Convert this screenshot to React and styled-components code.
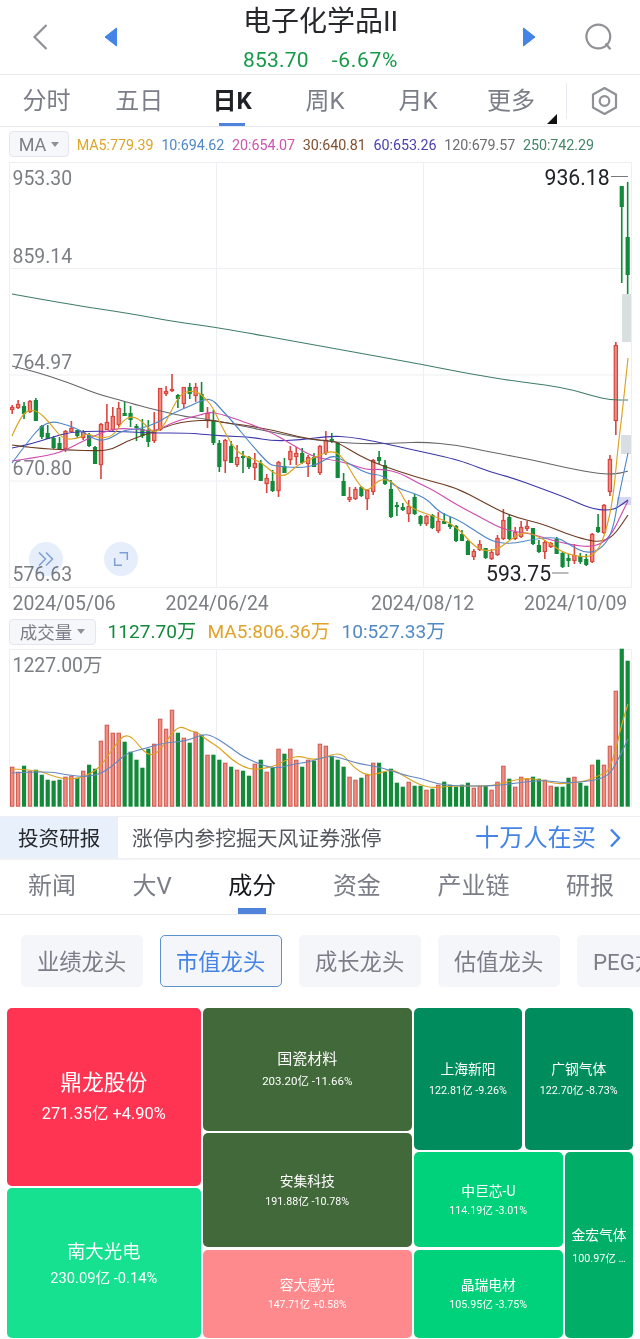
import styled, { createGlobalStyle } from "styled-components";

const GlobalStyle = createGlobalStyle`
  * {
    box-sizing: border-box;
  }
  body {
    margin: 0;
    background: #fff;
    font-family: Roboto, "Noto Sans CJK SC", sans-serif;
  }
  svg {
    display: block;
  }
`;

const Pagina = styled.div`
  width: 640px;
  height: 1339px;
  overflow: hidden;
  background: #fff;
`;

const Header = styled.header`
  display: flex;
  align-items: center;
  justify-content: space-between;
  height: 75px;
  padding: 0 26px 0 32px;
  border-bottom: 1px solid #e8eaef;
`;
const HeaderSide = styled.div`
  display: flex;
  align-items: center;
  justify-content: space-between;
  width: ${(p) => p.$width}px;
`;
const TitleBox = styled.div`
  display: flex;
  flex-direction: column;
  align-items: center;
  padding-top: 7px;
`;
const Title = styled.h1`
  margin: 0;
  font-size: 28px;
  line-height: 38px;
  font-weight: 400;
  color: #26282c;
`;
const Quote = styled.div`
  display: flex;
  gap: 23px;
  font-size: 21px;
  line-height: 38px;
  color: #159a48;
  letter-spacing: 0.2px;
`;
const Change = styled.span`
  letter-spacing: 0.7px;
`;

const PeriodBar = styled.nav`
  display: flex;
  align-items: center;
  height: 52px;
  border-bottom: 1px solid #e8eaef;
`;
const Period = styled.div`
  position: relative;
  flex: none;
  width: 92.9px;
  height: 51px;
  line-height: 53px;
  text-align: center;
  font-size: 24px;
  font-weight: ${(p) => (p.$active ? 700 : 400)};
  color: ${(p) => (p.$active ? "#1f2126" : "#7b7e88")};
`;
const Underline = styled.span`
  position: absolute;
  left: 50%;
  bottom: 0;
  width: ${(p) => p.$width}px;
  height: ${(p) => p.$height}px;
  margin-left: ${(p) => -p.$width / 2}px;
  background: #4f83dc;
`;
const Corner = styled.span`
  position: absolute;
  right: 0;
  bottom: 2px;
  border-left: 10px solid transparent;
  border-bottom: 10px solid #111;
`;
const Settings = styled.div`
  display: flex;
  flex: 1;
  justify-content: center;
  align-items: center;
  height: 36px;
  margin-left: 9px;
  border-left: 1px solid #e8eaef;
`;

const Legend = styled.div`
  display: flex;
  align-items: center;
  height: ${(p) => p.$height}px;
  padding-left: 9px;
  gap: ${(p) => p.$gap}px;
  font-size: ${(p) => p.$size}px;
  letter-spacing: ${(p) => p.$spacing || 0}px;
  white-space: nowrap;
`;
const Pill = styled.div`
  display: flex;
  align-items: center;
  justify-content: center;
  gap: 5px;
  width: ${(p) => p.$width}px;
  height: 26px;
  border: 1px solid #e4e6ee;
  border-radius: 4px;
  background: #f6f7fb;
  color: #7b7e88;
  font-size: ${(p) => p.$size}px;
  letter-spacing: 0;
`;
const Arrow = styled.span`
  border: 4.5px solid transparent;
  border-top: 5px solid #8d9099;
  border-bottom: 0;
`;
const Valor = styled.span`
  line-height: 24px;
  padding-top: ${(p) => p.$drop || 0}px;
  color: ${(p) => p.$color};
`;

const ChartArea = styled.div`
  position: relative;
  padding-left: 8px;
`;
const RoundButton = styled.div`
  position: absolute;
  top: ${(p) => p.$top}px;
  left: ${(p) => p.$left}px;
  display: flex;
  align-items: center;
  justify-content: center;
  width: 34px;
  height: 34px;
  border-radius: 50%;
  background: #e6eefb;
  mix-blend-mode: multiply;
`;

const Promo = styled.div`
  display: flex;
  align-items: center;
  height: 44px;
  margin-top: 9px;
  border-top: 1px solid #eceef3;
  border-bottom: 2px solid #f1f2f5;
  font-size: 20.8px;
  line-height: 43px;
  color: #55575e;
`;
const PromoTag = styled.div`
  width: 118px;
  height: 41px;
  line-height: 45px;
  padding-left: 18px;
  margin-right: 14px;
  background: #e8f0fc;
  color: #26282c;
  font-size: 20.6px;
`;
const PromoText = styled.div`
  padding-top: 3px;
`;
const PromoLink = styled.div`
  display: flex;
  align-items: center;
  gap: 13px;
  margin-left: auto;
  padding: 1px 19px 0 0;
  font-size: 24.2px;
  color: #4484e6;
`;

const Tabs = styled.nav`
  display: flex;
  justify-content: space-between;
  height: 55px;
  padding: 0 26px 0 28px;
  border-bottom: 1px solid #e8eaef;
`;
const Tab = styled.div`
  position: relative;
  line-height: 52px;
  font-size: 24px;
  color: ${(p) => (p.$active ? "#17191d" : "#7b7e88")};
`;

const Chips = styled.div`
  display: flex;
  gap: 17px;
  padding: 20px 0 21px 21px;
  overflow: hidden;
`;
const Chip = styled.div`
  flex: none;
  width: 122px;
  height: 52px;
  padding-left: 15px;
  line-height: 52px;
  border: 1px solid ${(p) => (p.$active ? "#5d93cd" : "#f5f6fa")};
  border-radius: 5px;
  background: #f5f6fa;
  color: ${(p) => (p.$active ? "#4484e6" : "#7b7e88")};
  font-size: 22.3px;
  white-space: nowrap;
`;

const TreeMap = styled.div`
  display: grid;
  grid-template-columns: 193.5px 208.5px 219px;
  gap: 2.5px;
  height: 330px;
  margin-left: 7px;
`;
const Split = styled.div`
  display: grid;
  gap: 2.5px;
  min-width: 0;
  min-height: 0;
  grid-template-rows: ${(p) => p.$rows || "none"};
  grid-template-columns: ${(p) => p.$cols || "none"};
`;
const Tile = styled.div`
  display: flex;
  flex-direction: column;
  align-items: center;
  justify-content: center;
  min-width: 0;
  padding-top: 3px;
  border-radius: 5px;
  background: ${(p) => p.$color};
  color: #fff;
  line-height: ${(p) => p.$lead}px;
  white-space: nowrap;
`;
const TileName = styled.div`
  font-size: ${(p) => p.$size}px;
`;
const TileValue = styled.div`
  font-size: ${(p) => p.$size}px;
`;

const RED = "#d9453f";
const GREEN = "#128a3a";
const STEP = 5.918;
const xAt = (i) => 12.2 + i * STEP;

// [up, high, bodyTop, bodyBottom, low]
const candles = [
  [1, 405, 407, 410, 414], [1, 400, 404, 408, 409], [0, 402, 406, 414, 419], [1, 400, 401, 412, 413], [0, 398, 400, 421, 421],
  [0, 425, 426, 437, 439], [0, 425, 433, 439, 439], [0, 436, 438, 448, 449], [0, 437, 443, 449, 449], [1, 430, 431, 449, 452],
  [1, 421, 428, 432, 433], [0, 430, 430, 436, 438], [1, 430, 432, 438, 440], [0, 433, 435, 446, 447], [0, 446, 447, 464, 464],
  [1, 423, 424, 465, 479], [1, 404, 422, 430, 430], [1, 407, 416, 430, 431], [1, 402, 408, 425, 427], [0, 402, 413, 416, 416],
  [0, 406, 413, 420, 427], [0, 424, 426, 428, 441], [0, 419, 429, 436, 438], [0, 420, 430, 442, 447], [1, 412, 432, 441, 443],
  [1, 388, 388, 430, 431], [1, 386, 391, 394, 396], [1, 374, 389, 391, 392], [0, 394, 395, 399, 408], [1, 387, 387, 404, 408],
  [0, 383, 387, 394, 399], [1, 383, 387, 396, 402], [0, 382, 394, 412, 412], [1, 407, 413, 421, 428], [0, 410, 420, 443, 445],
  [0, 440, 443, 467, 472], [1, 439, 440, 461, 473], [0, 441, 446, 463, 463], [1, 445, 457, 465, 467], [0, 451, 456, 458, 473],
  [0, 456, 457, 467, 469], [1, 453, 463, 468, 480], [0, 460, 463, 481, 481], [1, 474, 478, 484, 493], [0, 470, 481, 491, 492],
  [1, 461, 462, 491, 497], [0, 458, 466, 473, 473], [1, 446, 451, 460, 465], [1, 447, 453, 457, 465], [0, 448, 453, 463, 464],
  [1, 455, 457, 464, 477], [0, 453, 457, 467, 467], [1, 445, 446, 473, 475], [1, 431, 440, 453, 455], [0, 433, 439, 442, 443],
  [0, 442, 443, 478, 478], [0, 473, 481, 496, 496], [1, 487, 497, 500, 502], [1, 487, 489, 499, 500], [0, 486, 487, 496, 497],
  [1, 489, 490, 499, 510], [1, 459, 460, 492, 495], [0, 451, 457, 461, 464], [0, 460, 465, 484, 485], [0, 480, 489, 517, 518],
  [0, 502, 505, 507, 516], [0, 503, 507, 510, 511], [1, 500, 506, 514, 522], [0, 494, 497, 514, 515], [0, 515, 516, 524, 526],
  [1, 515, 516, 524, 526], [0, 514, 515, 528, 529], [1, 512, 521, 531, 533], [0, 513, 521, 524, 524], [0, 517, 524, 527, 529],
  [0, 525, 526, 541, 542], [0, 530, 534, 541, 541], [0, 540, 541, 555, 555], [1, 549, 551, 557, 560], [1, 540, 544, 550, 551],
  [0, 548, 548, 558, 559], [1, 549, 552, 559, 560], [1, 535, 538, 555, 556], [1, 509, 520, 539, 540], [0, 515, 517, 539, 540],
  [1, 527, 532, 539, 540], [1, 521, 527, 537, 538], [1, 521, 526, 529, 531], [0, 528, 528, 544, 545], [0, 540, 545, 552, 553],
  [1, 540, 542, 552, 559], [1, 542, 543, 547, 548], [0, 537, 539, 554, 554], [0, 552, 553, 567, 568], [0, 554, 558, 561, 567],
  [1, 544, 555, 561, 564], [0, 553, 556, 562, 564], [0, 554, 559, 565, 566], [1, 533, 534, 562, 563], [0, 514, 527, 532, 533],
  [1, 504, 505, 533, 534], [1, 455, 459, 492, 496], [1, 342, 345, 421, 435], [0, 186, 186, 207, 283], [0, 182, 237, 275, 294],
];

const volumes = [
  40, 35, 41, 36, 37, 32, 27, 26, 27, 30, 31, 29, 36, 42, 38, 66, 82, 74, 74, 65,
  55, 47, 39, 58, 63, 88, 78, 97, 74, 69, 64, 75, 72, 52, 52, 47, 44, 40, 37, 36,
  31, 43, 47, 35, 39, 58, 53, 58, 47, 40, 47, 46, 63, 61, 51, 47, 40, 30, 27, 29,
  32, 44, 44, 35, 38, 24, 20, 25, 21, 21, 17, 18, 22, 25, 22, 20, 22, 24, 19, 21,
  21, 17, 25, 41, 28, 20, 30, 28, 30, 28, 27, 21, 20, 20, 29, 30, 24, 21, 42, 47,
  42, 61, 116, 158, 146,
];

const averages = [
  { color: "#3f7d69", points: "12,294 67,304 133,314 170,321 220,328 310,344 397,360 420,364 470,374 520,382 547,385 573,390 593,396 610,400 628,400" },
  { color: "#66666a", points: "12,366 33,371 67,382 97,394 120,400 133,404 160,411 187,417 200,418 233,424 267,431 300,438 333,442 367,444 400,443 423,442 457,445 490,452 533,460 567,468 600,474 617,474 628,471" },
  { color: "#3c37ad", points: "12,448 27,445 50,438 70,432 100,431 133,432 150,433 187,433 200,434 223,436 250,437 273,441 300,440 330,436 350,437 373,441 400,447 423,452 450,458 467,463 490,472 513,478 540,488 567,498 587,507 600,510 610,510 617,508 628,500" },
  { color: "#6f3b20", points: "12,445 33,448 67,450 100,451 113,449 127,441 147,434 173,424 190,421 210,420 220,422 243,425 273,430 307,439 333,441 340,444 367,460 400,472 430,481 457,488 483,502 510,516 543,524 567,534 587,540 600,542 613,537 628,515" },
  { color: "#cf4aae", points: "12,461 33,458 60,453 83,441 103,432 120,428 143,430 157,431 173,422 200,415 210,412 220,414 230,417 267,430 293,445 313,457 333,460 350,464 367,470 383,469 400,473 420,484 433,490 457,505 480,517 500,528 517,532 533,534 550,540 573,545 590,547 603,543 613,532 620,517 628,501" },
  { color: "#4f86c8", points: "12,463 27,443 40,427 52,421 67,425 80,430 97,441 110,439 123,430 140,429 157,423 173,413 190,406 205,399 213,400 220,408 233,422 250,443 267,462 273,466 300,468 317,465 332,455 343,460 367,474 383,475 397,488 413,493 427,499 440,513 457,519 477,532 493,542 513,544 533,539 557,537 570,545 587,554 603,548 613,530 618,500 628,453" },
  { color: "#dba21f", points: "12,436 20,418 28,410 38,411 50,423 63,440 80,438 87,433 97,438 113,437 123,420 133,416 143,422 153,433 163,428 173,407 182,392 197,391 207,400 213,408 220,423 233,447 243,456 260,461 273,473 285,477 297,465 313,458 332,450 343,457 357,482 367,493 380,478 393,482 400,491 407,505 420,512 437,517 457,527 473,545 483,551 497,550 510,540 523,532 533,534 550,543 563,553 587,558 597,552 605,535 613,500 618,447 622,415 628,358" },
];

const volumeAverages = [
  { color: "#dba21f", points: "12,769 37,770 50,775 63,779 77,779 90,774 100,767 107,757 117,743 124,735 132,737 140,747 147,754 153,755 160,750 170,736 177,728 183,727 190,731 197,732 207,740 220,748 233,761 250,770 267,768 277,765 290,758 300,756 313,760 327,757 333,754 343,754 353,767 367,776 380,773 393,769 407,778 420,785 433,788 450,786 470,786 493,786 510,781 527,778 540,780 557,784 570,783 587,781 600,775 608,772 615,753 622,723 628,704" },
  { color: "#6488c0", points: "12,773 47,771 67,775 87,777 103,773 117,762 127,753 147,748 163,743 187,741 203,734 213,736 230,747 243,757 267,767 280,768 293,764 310,762 330,755 347,760 360,764 380,767 407,776 420,778 437,784 457,786 493,786 517,783 543,780 563,783 583,782 600,779 610,774 618,760 628,739" },
];

// smooth path through the points, using midpoints as the joins
const curve = (points) => {
  const p = points.split(" ").map((s) => s.split(",").map(Number));
  let d = `M${p[0]}`;
  for (let i = 1; i < p.length - 1; i++) {
    d += `Q${p[i]} ${(p[i][0] + p[i + 1][0]) / 2},${(p[i][1] + p[i + 1][1]) / 2}`;
  }
  return d + `L${p[p.length - 1]}`;
};

const Lines = ({ data }) =>
  data.map((l, i) => (
    <path key={i} d={curve(l.points)} fill="none" stroke={l.color} strokeWidth="1.15" />
  ));

const AxisText = styled.text`
  font-family: Roboto, "Noto Sans CJK SC", sans-serif;
  font-size: ${(p) => p.$size || 19.4}px;
  fill: ${(p) => p.$color || "#7b7e83"};
`;

const KChart = () => (
  <svg width="632" height="454" viewBox="8 161 632 454">
    <path
      d="M9 162.5H631.5V587.5H9.5V162.5M9 268.5H631M9 375H631M9 481H631M216.5 162V587M423.5 162V587"
      fill="none"
      stroke="#eeeff2"
    />
    <rect x="622" y="294" width="9" height="48" fill="#d9dee1" />
    <rect x="621" y="435" width="10" height="19" fill="#d9dde4" />
    <rect x="617" y="497" width="14" height="8" fill="#d5d8ee" />
    {candles.map(([up, high, top, bottom, low], i) => (
      <g key={i}>
        <rect x={xAt(i) - 0.8} y={high} width="1.6" height={low - high} fill={up ? RED : GREEN} />
        {up ? (
          <rect x={xAt(i) - 1.6} y={top + 0.5} width="3.2" height={Math.max(bottom - top - 1, 1)} fill="#ee8d80" stroke={RED} strokeWidth="1.2" />
        ) : (
          <rect x={xAt(i) - 2.1} y={top} width="4.2" height={bottom - top} fill={GREEN} />
        )}
      </g>
    ))}
    <Lines data={averages} />
    <AxisText x="12.5" y="185">953.30</AxisText>
    <AxisText x="12.5" y="263">859.14</AxisText>
    <AxisText x="12.5" y="369">764.97</AxisText>
    <AxisText x="12.5" y="475">670.80</AxisText>
    <AxisText x="12.5" y="581">576.63</AxisText>
    <AxisText x="12.5" y="609.5">2024/05/06</AxisText>
    <AxisText x="165.5" y="609.5">2024/06/24</AxisText>
    <AxisText x="371" y="609.5">2024/08/12</AxisText>
    <AxisText x="524" y="609.5">2024/10/09</AxisText>
    <AxisText x="544.5" y="184.5" $size={21.2} $color="#222428">936.18</AxisText>
    <AxisText x="486" y="580.5" $size={21.2} $color="#222428">593.75</AxisText>
    <path d="M611 176.5H628M552 573H568.5" stroke="#77797d" />
  </svg>
);

const VolumeChart = () => (
  <svg width="632" height="159" viewBox="8 648 632 159">
    <path d="M9.5 807V649.5H631.5V807M216.5 649V807M423.5 649V807" fill="none" stroke="#eeeff2" />
    {volumes.map((v, i) =>
      candles[i][0] ? (
        <rect key={i} x={xAt(i) - 1.7} y={807.2 - v} width="3.4" height={v - 1} fill="#ee8d80" stroke="#cf5850" />
      ) : (
        <rect key={i} x={xAt(i) - 2.1} y={806.7 - v} width="4.2" height={v} fill={GREEN} />
      )
    )}
    <Lines data={volumeAverages} />
    <AxisText x="12.5" y="672">1227.00万</AxisText>
  </svg>
);

const Stock = ({ name, value, color, lead, size, sub }) => (
  <Tile $color={color} $lead={lead}>
    <TileName $size={size}>{name}</TileName>
    <TileValue $size={sub}>{value}</TileValue>
  </Tile>
);

const App = () => {
  return (
    <Pagina>
      <GlobalStyle />
      <Header>
        <HeaderSide $width={87}>
          <svg width="17" height="28" viewBox="0 0 17 28">
            <path d="M14.5 2L2.5 14L14.5 26" fill="none" stroke="#8f9196" strokeWidth="2.2" />
          </svg>
          <svg width="15" height="20" viewBox="0 0 15 20">
            <path d="M1 10L12.5 1V19Z" fill="#4484e6" stroke="#4484e6" strokeLinejoin="round" />
          </svg>
        </HeaderSide>
        <TitleBox>
          <Title>电子化学品II</Title>
          <Quote>
            <span>853.70</span>
            <Change>-6.67%</Change>
          </Quote>
        </TitleBox>
        <HeaderSide $width={92}>
          <svg width="15" height="20" viewBox="0 0 15 20">
            <path d="M13 10L1.5 1V19Z" fill="#4484e6" stroke="#4484e6" strokeLinejoin="round" />
          </svg>
          <svg width="29" height="30" viewBox="0 0 29 30">
            <path d="M20.5 21.5L25.5 27.3" stroke="#8f9196" strokeWidth="2.2" />
            <circle cx="13.3" cy="14.5" r="11.9" fill="none" stroke="#8f9196" strokeWidth="2.2" />
          </svg>
        </HeaderSide>
      </Header>

      <PeriodBar>
        <Period>分时</Period>
        <Period>五日</Period>
        <Period $active>
          日K
          <Underline $width={26} $height={3} />
        </Period>
        <Period>周K</Period>
        <Period>月K</Period>
        <Period>
          更多
          <Corner />
        </Period>
        <Settings>
          <svg width="28" height="30" viewBox="0 0 28 30" fill="none" stroke="#8f9196" strokeWidth="2.2">
            <path d="M14.5 2L26 8.5V21.5L14.5 28L3 21.5V8.5Z" strokeLinejoin="round" />
            <circle cx="14.5" cy="15" r="4.8" />
          </svg>
        </Settings>
      </PeriodBar>

      <Legend $height={34} $gap={7.8} $size={14.3} $spacing={-0.06}>
        <Pill $width={60} $size={18}>
          MA
          <Arrow />
        </Pill>
        <Valor $drop={2} $color="#dba62a">MA5:779.39</Valor>
        <Valor $drop={2} $color="#5089c6">10:694.62</Valor>
        <Valor $drop={2} $color="#cc55ae">20:654.07</Valor>
        <Valor $drop={2} $color="#80502f">30:640.81</Valor>
        <Valor $drop={2} $color="#4a41ae">60:653.26</Valor>
        <Valor $drop={2} $color="#6c6d70">120:679.57</Valor>
        <Valor $drop={2} $color="#458468">250:742.29</Valor>
      </Legend>

      <ChartArea>
        <KChart />
        <RoundButton $left={29} $top={381}>
          <svg width="16" height="16" viewBox="0 0 16 16" fill="none" stroke="#7d9fd3" strokeWidth="1.5">
            <path d="M1 1.5L7.5 8L1 14.5M8 1.5L14.5 8L8 14.5" />
          </svg>
        </RoundButton>
        <RoundButton $left={104} $top={381}>
          <svg width="16" height="16" viewBox="0 0 16 16" fill="none" stroke="#7d9fd3" strokeWidth="1.5">
            <path d="M6.5 1.7H14.3V9M1.7 7V14.3H9" />
          </svg>
        </RoundButton>
      </ChartArea>

      <Legend $height={33} $gap={11.5} $size={19.1}>
        <Pill $width={87} $size={17.5}>
          成交量
          <Arrow />
        </Pill>
        <Valor $color="#128a3a">1127.70万</Valor>
        <Valor $color="#e2a32b">MA5:806.36万</Valor>
        <Valor $color="#5089c6">10:527.33万</Valor>
      </Legend>

      <ChartArea>
        <VolumeChart />
      </ChartArea>

      <Promo>
        <PromoTag>投资研报</PromoTag>
        <PromoText>涨停内参挖掘天风证券涨停</PromoText>
        <PromoLink>
          十万人在买
          <svg width="12" height="20" viewBox="0 0 12 20">
            <path d="M2 1.5L10 10L2 18.5" fill="none" stroke="#4484e6" strokeWidth="2.5" />
          </svg>
        </PromoLink>
      </Promo>

      <Tabs>
        <Tab>新闻</Tab>
        <Tab>大V</Tab>
        <Tab $active>
          成分
          <Underline $width={28} $height={6} />
        </Tab>
        <Tab>资金</Tab>
        <Tab>产业链</Tab>
        <Tab>研报</Tab>
      </Tabs>

      <Chips>
        <Chip>业绩龙头</Chip>
        <Chip $active>市值龙头</Chip>
        <Chip>成长龙头</Chip>
        <Chip>估值龙头</Chip>
        <Chip>PEG龙头</Chip>
      </Chips>

      <TreeMap>
        <Split $rows="177.5px 1fr">
          <Stock name="鼎龙股份" value="271.35亿 +4.90%" color="#ff3352" lead={31} size={21.8} sub={16.4} />
          <Stock name="南大光电" value="230.09亿 -0.14%" color="#15e191" lead={27} size={18.4} sub={14.7} />
        </Split>
        <Split $rows="122.5px 114px 1fr">
          <Stock name="国瓷材料" value="203.20亿 -11.66%" color="#42693a" lead={21.5} size={15} sub={11.5} />
          <Stock name="安集科技" value="191.88亿 -10.78%" color="#42693a" lead={20.5} size={13.8} sub={10.7} />
          <Stock name="容大感光" value="147.71亿 +0.58%" color="#ff8a8e" lead={19.5} size={13.8} sub={10.4} />
        </Split>
        <Split $rows="141.5px 1fr">
          <Split $cols="108px 1fr">
            <Stock name="上海新阳" value="122.81亿 -9.26%" color="#008c5c" lead={22} size={13.8} sub={10.7} />
            <Stock name="广钢气体" value="122.70亿 -8.73%" color="#008c5c" lead={22} size={13.8} sub={10.7} />
          </Split>
          <Split $cols="148.5px 1fr">
            <Split $rows="95px 1fr">
              <Stock name="中巨芯-U" value="114.19亿 -3.01%" color="#00d17b" lead={19.5} size={13.8} sub={10.7} />
              <Stock name="晶瑞电材" value="105.95亿 -3.75%" color="#00d17b" lead={19.5} size={13.8} sub={10.7} />
            </Split>
            <Stock name="金宏气体" value="100.97亿 …" color="#00ae68" lead={24} size={13.8} sub={10.7} />
          </Split>
        </Split>
      </TreeMap>
    </Pagina>
  );
};

export default App;
